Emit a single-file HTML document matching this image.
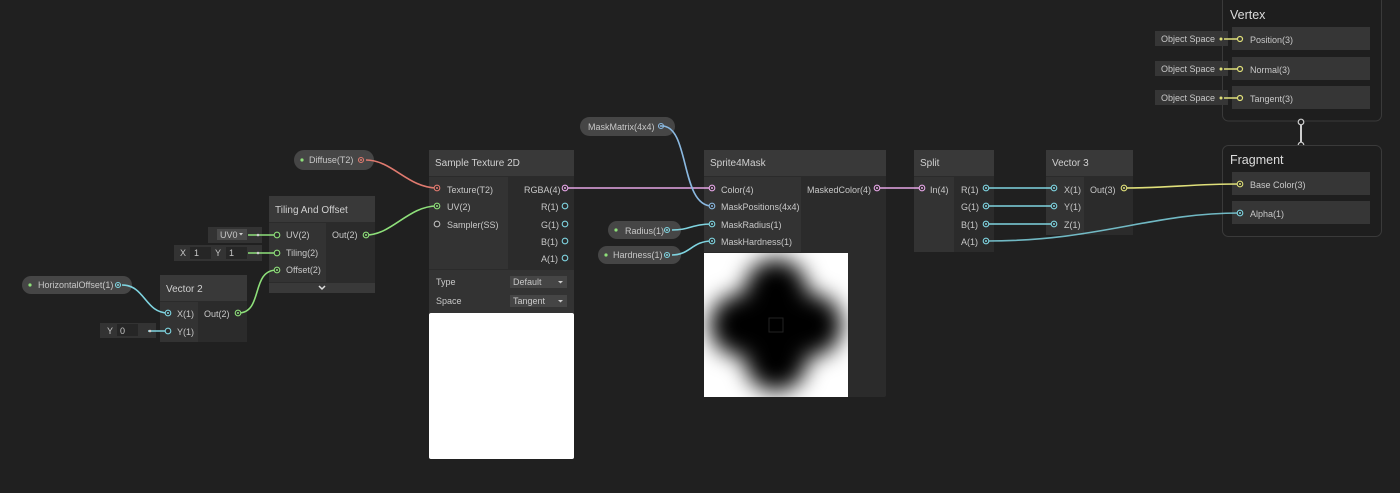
<!DOCTYPE html>
<html><head><meta charset="utf-8"><style>
html,body{margin:0;padding:0;background:#202020;width:1400px;height:493px;overflow:hidden}
svg text{font-family:"Liberation Sans",sans-serif;font-size:9px;fill:#c8c8c8}
.h{font-size:10px;fill:#d0d0d0}
.t{font-size:12.5px;fill:#dcdcdc}
</style></head><body>
<svg width="1400" height="493" xmlns="http://www.w3.org/2000/svg">
<defs>
<filter id="bl" x="-50%" y="-50%" width="200%" height="200%"><feGaussianBlur stdDeviation="11"/></filter>
<clipPath id="pc"><rect x="704" y="253" width="144" height="144"/></clipPath>
</defs>
<rect width="1400" height="493" fill="#202020"/>

<rect x="1222.5" y="-5" width="159" height="126" rx="6" fill="#1e1e1e" stroke="#3a3a3a"/>
<text x="1230" y="19" class="t">Vertex</text>
<rect x="1232" y="27" width="138" height="23" fill="#363636"/>
<rect x="1232" y="57" width="138" height="23" fill="#363636"/>
<rect x="1232" y="86" width="138" height="23" fill="#363636"/>
<text x="1250" y="43">Position(3)</text>
<text x="1250" y="73">Normal(3)</text>
<text x="1250" y="102">Tangent(3)</text>
<rect x="1155" y="31" width="73" height="15" fill="#363636"/>
<rect x="1155" y="61" width="73" height="15" fill="#363636"/>
<rect x="1155" y="90" width="73" height="15" fill="#363636"/>
<text x="1161" y="42">Object Space</text>
<text x="1161" y="72">Object Space</text>
<text x="1161" y="101">Object Space</text>
<g stroke="#e0e07a" stroke-width="1.5" fill="none">
<path d="M1224 39H1238M1224 69H1238M1224 98H1238"/>
</g>
<g fill="#e0e07a"><circle cx="1221" cy="39" r="1.5"/><circle cx="1221" cy="69" r="1.5"/><circle cx="1221" cy="98" r="1.5"/></g>
<g fill="#363636" stroke="#e0e07a" stroke-width="1.2"><circle cx="1240" cy="39" r="2.5"/><circle cx="1240" cy="69" r="2.5"/><circle cx="1240" cy="98" r="2.5"/></g>
<line x1="1301" y1="122" x2="1301" y2="144" stroke="#cfcfcf" stroke-width="2"/>
<circle cx="1301" cy="122" r="2.8" fill="#202020" stroke="#cfcfcf" stroke-width="1.2"/>
<circle cx="1301" cy="145" r="2.8" fill="#202020" stroke="#cfcfcf" stroke-width="1.2"/>
<rect x="1222.5" y="145.5" width="159" height="91" rx="6" fill="#1e1e1e" stroke="#3a3a3a"/>
<text x="1230" y="164" class="t">Fragment</text>
<rect x="1232" y="172" width="138" height="23" fill="#363636"/>
<rect x="1232" y="201" width="138" height="23" fill="#363636"/>
<text x="1250" y="188">Base Color(3)</text>
<text x="1250" y="217">Alpha(1)</text>

<rect x="294" y="150" width="80" height="20" rx="10" fill="#464646"/>
<circle cx="302" cy="160" r="1.6" fill="#8ee07a"/><text x="309" y="163">Diffuse(T2)</text>
<circle cx="361" cy="160" r="2.5" fill="none" stroke="#e07a6f" stroke-width="1.1"/><circle cx="361" cy="160" r="1" fill="#e07a6f"/>
<rect x="22" y="276" width="110" height="18" rx="9" fill="#464646"/>
<circle cx="30" cy="285" r="1.6" fill="#8ee07a"/><text x="38" y="288">HorizontalOffset(1)</text>
<circle cx="118" cy="285" r="2.5" fill="none" stroke="#7fd4e0" stroke-width="1.1"/><circle cx="118" cy="285" r="1" fill="#7fd4e0"/>
<rect x="580" y="117" width="95" height="19" rx="9.5" fill="#464646"/>
<text x="588" y="130">MaskMatrix(4x4)</text>
<circle cx="661" cy="126" r="2.5" fill="none" stroke="#8ab8e0" stroke-width="1.1"/><circle cx="661" cy="126" r="1" fill="#8ab8e0"/>
<rect x="608" y="221" width="73" height="18" rx="9" fill="#464646"/>
<circle cx="616" cy="230" r="1.6" fill="#8ee07a"/><text x="625" y="234">Radius(1)</text>
<circle cx="667" cy="230" r="2.5" fill="none" stroke="#7fd4e0" stroke-width="1.1"/><circle cx="667" cy="230" r="1" fill="#7fd4e0"/>
<rect x="598" y="246" width="83" height="18" rx="9" fill="#464646"/>
<circle cx="606" cy="255" r="1.6" fill="#8ee07a"/><text x="613" y="258">Hardness(1)</text>
<circle cx="667" cy="255" r="2.5" fill="none" stroke="#7fd4e0" stroke-width="1.1"/><circle cx="667" cy="255" r="1" fill="#7fd4e0"/>

<rect x="269" y="196" width="106" height="97" fill="#2b2b2b"/>
<rect x="269" y="196" width="106" height="26" fill="#393939"/>
<rect x="269" y="223" width="57" height="59" fill="#333"/>
<rect x="269" y="283" width="106" height="10" fill="#393939"/>
<path d="M319 286l3 3 3-3" stroke="#ddd" stroke-width="1.5" fill="none"/>
<text x="275" y="213" class="h">Tiling And Offset</text>
<text x="286" y="238">UV(2)</text><text x="286" y="256">Tiling(2)</text><text x="286" y="273">Offset(2)</text>
<text x="332" y="238">Out(2)</text>
<rect x="208" y="227" width="54" height="16" fill="#333"/>
<rect x="217" y="229" width="30" height="11" fill="#4a4a4a"/><text x="220" y="238">UV0</text>
<path d="M239 233l2 2.5 2-2.5z" fill="#ccc"/>
<rect x="174" y="245" width="88" height="16" fill="#333"/>
<text x="180" y="256">X</text><rect x="190" y="247" width="21" height="12" fill="#262626"/><text x="194" y="256">1</text>
<text x="215" y="256">Y</text><rect x="226" y="247" width="21" height="12" fill="#262626"/><text x="229" y="256">1</text>
<rect x="100" y="323" width="56" height="15" fill="#333"/>
<text x="107" y="334">Y</text><rect x="117" y="324" width="21" height="12" fill="#262626"/><text x="120" y="334">0</text>

<rect x="160" y="275" width="87" height="67" fill="#2b2b2b"/>
<rect x="160" y="275" width="87" height="26" fill="#393939"/>
<rect x="160" y="302" width="38" height="40" fill="#333"/>
<text x="166" y="292" class="h">Vector 2</text>
<text x="177" y="317">X(1)</text><text x="177" y="335">Y(1)</text>
<text x="204" y="317">Out(2)</text>

<rect x="429" y="150" width="145" height="163" fill="#2b2b2b"/>
<rect x="429" y="150" width="145" height="26" fill="#393939"/>
<rect x="429" y="177" width="79" height="92" fill="#333"/>
<rect x="429" y="270" width="145" height="43" fill="#333"/>
<text x="435" y="166" class="h">Sample Texture 2D</text>
<text x="447" y="193">Texture(T2)</text><text x="447" y="210">UV(2)</text><text x="447" y="228">Sampler(SS)</text>
<text x="524" y="193">RGBA(4)</text><text x="541" y="210">R(1)</text><text x="541" y="228">G(1)</text><text x="541" y="245">B(1)</text><text x="541" y="262">A(1)</text>
<text x="436" y="285">Type</text><text x="436" y="304">Space</text>
<rect x="510" y="276" width="57" height="12" fill="#454545"/><text x="513" y="285">Default</text><path d="M558 281l2.5 2.5 2.5-2.5z" fill="#ccc"/>
<rect x="510" y="295" width="57" height="12" fill="#454545"/><text x="513" y="304">Tangent</text><path d="M558 300l2.5 2.5 2.5-2.5z" fill="#ccc"/>
<rect x="429" y="313" width="145" height="146" rx="2" fill="#fff"/>

<rect x="704" y="150" width="182" height="247" rx="2" fill="#2b2b2b"/>
<rect x="704" y="150" width="182" height="26" fill="#393939"/>
<rect x="704" y="177" width="97" height="75" fill="#333"/>
<text x="710" y="166" class="h">Sprite4Mask</text>
<text x="721" y="193">Color(4)</text><text x="721" y="210">MaskPositions(4x4)</text><text x="721" y="228">MaskRadius(1)</text><text x="721" y="245">MaskHardness(1)</text>
<text x="807" y="193">MaskedColor(4)</text>
<rect x="704" y="253" width="144" height="144" fill="#fff"/>
<g clip-path="url(#pc)"><g filter="url(#bl)" fill="#000">
<circle cx="776" cy="290" r="31"/><circle cx="776" cy="360" r="31"/>
<circle cx="741" cy="325" r="31"/><circle cx="811" cy="325" r="31"/>
<path d="M776 265L836 325 776 385 716 325z"/>
</g></g>
<rect x="769" y="318" width="14" height="14" fill="none" stroke="#222" stroke-width="1"/>

<rect x="914" y="150" width="80" height="102" fill="#2b2b2b"/>
<rect x="914" y="150" width="80" height="26" fill="#393939"/>
<rect x="914" y="177" width="40" height="75" fill="#333"/>
<text x="920" y="166" class="h">Split</text>
<text x="930" y="193">In(4)</text>
<text x="961" y="193">R(1)</text><text x="961" y="210">G(1)</text><text x="961" y="228">B(1)</text><text x="961" y="245">A(1)</text>

<rect x="1046" y="150" width="87" height="85" fill="#2b2b2b"/>
<rect x="1046" y="150" width="87" height="26" fill="#393939"/>
<rect x="1046" y="177" width="38" height="58" fill="#333"/>
<text x="1052" y="166" class="h">Vector 3</text>
<text x="1064" y="193">X(1)</text><text x="1064" y="210">Y(1)</text><text x="1064" y="228">Z(1)</text>
<text x="1090" y="193">Out(3)</text>

<g fill="none" stroke-width="1.6">
<path d="M366 160C392 160 408 188 437 188" stroke="#e07a6f"/>
<path d="M366 235C392 235 408 206 437 206" stroke="#8ee07a"/>
<path d="M238 313C264 313 250 270 277 270" stroke="#8ee07a"/>
<path d="M248 235H277M248 253H277" stroke="#8ee07a"/>
<path d="M122 285C145 285 145 313 168 313" stroke="#7fd4e0"/>
<path d="M148 331H168" stroke="#7fd4e0"/>
<path d="M565 188H712" stroke="#e6a6e6"/>
<path d="M662 126C690 126 680 206 712 206" stroke="#8ab8e0"/>
<path d="M672 230C690 230 692 224 712 224" stroke="#7fd4e0"/>
<path d="M672 255C690 255 692 241 712 241" stroke="#7fd4e0"/>
<path d="M877 188H922" stroke="#e6a6e6"/>
<path d="M986 188H1054M986 206H1054M986 224H1054" stroke="#7fd4e0"/>
<path d="M986 241C1100 241 1150 213 1240 213" stroke="#7fd4e0" stroke-opacity="0.85"/>
<path d="M1124 188C1170 188 1190 184 1240 184" stroke="#e0e07a"/>
</g>
<g stroke-width="1.1">
<g fill="#2b2b2b" stroke="#e07a6f"><circle cx="437" cy="188" r="2.8"/></g>
<g fill="#2b2b2b" stroke="#8ee07a"><circle cx="437" cy="206" r="2.8"/><circle cx="277" cy="235" r="2.8"/><circle cx="277" cy="253" r="2.8"/><circle cx="277" cy="270" r="2.8"/><circle cx="366" cy="235" r="2.8"/><circle cx="238" cy="313" r="2.8"/></g>
<g fill="#2b2b2b" stroke="#bbb"><circle cx="437" cy="224" r="2.8"/></g>
<g fill="#2b2b2b" stroke="#e6a6e6"><circle cx="565" cy="188" r="2.8"/><circle cx="712" cy="188" r="2.8"/><circle cx="877" cy="188" r="2.8"/><circle cx="922" cy="188" r="2.8"/></g>
<g fill="#2b2b2b" stroke="#7fd4e0"><circle cx="565" cy="206" r="2.8"/><circle cx="565" cy="224" r="2.8"/><circle cx="565" cy="241" r="2.8"/><circle cx="565" cy="258" r="2.8"/><circle cx="168" cy="313" r="2.8"/><circle cx="168" cy="331" r="2.8"/><circle cx="712" cy="224" r="2.8"/><circle cx="712" cy="241" r="2.8"/><circle cx="986" cy="188" r="2.8"/><circle cx="986" cy="206" r="2.8"/><circle cx="986" cy="224" r="2.8"/><circle cx="986" cy="241" r="2.8"/><circle cx="1054" cy="188" r="2.8"/><circle cx="1054" cy="206" r="2.8"/><circle cx="1054" cy="224" r="2.8"/><circle cx="1240" cy="213" r="2.8"/></g>
<g fill="#2b2b2b" stroke="#8ab8e0"><circle cx="712" cy="206" r="2.8"/></g>
<g fill="#2b2b2b" stroke="#e0e07a"><circle cx="1124" cy="188" r="2.8"/><circle cx="1240" cy="184" r="2.8"/></g>
</g>
<g fill="#ccc"><circle cx="258" cy="235" r="1.3"/><circle cx="258" cy="253" r="1.3"/><circle cx="150" cy="331" r="1.3"/></g>
<g fill="#e07a6f"><circle cx="437" cy="188" r="1"/></g>
<g fill="#8ee07a"><circle cx="437" cy="206" r="1"/><circle cx="277" cy="270" r="1"/><circle cx="366" cy="235" r="1"/><circle cx="238" cy="313" r="1"/></g>
<g fill="#e6a6e6"><circle cx="565" cy="188" r="1"/><circle cx="712" cy="188" r="1"/><circle cx="877" cy="188" r="1"/><circle cx="922" cy="188" r="1"/></g>
<g fill="#7fd4e0"><circle cx="168" cy="313" r="1"/><circle cx="712" cy="224" r="1"/><circle cx="712" cy="241" r="1"/><circle cx="986" cy="188" r="1"/><circle cx="986" cy="206" r="1"/><circle cx="986" cy="224" r="1"/><circle cx="986" cy="241" r="1"/><circle cx="1054" cy="188" r="1"/><circle cx="1054" cy="206" r="1"/><circle cx="1054" cy="224" r="1"/><circle cx="1240" cy="213" r="1"/></g>
<g fill="#8ab8e0"><circle cx="712" cy="206" r="1"/></g>
<g fill="#e0e07a"><circle cx="1124" cy="188" r="1"/><circle cx="1240" cy="184" r="1"/></g>
</svg>
</body></html>
